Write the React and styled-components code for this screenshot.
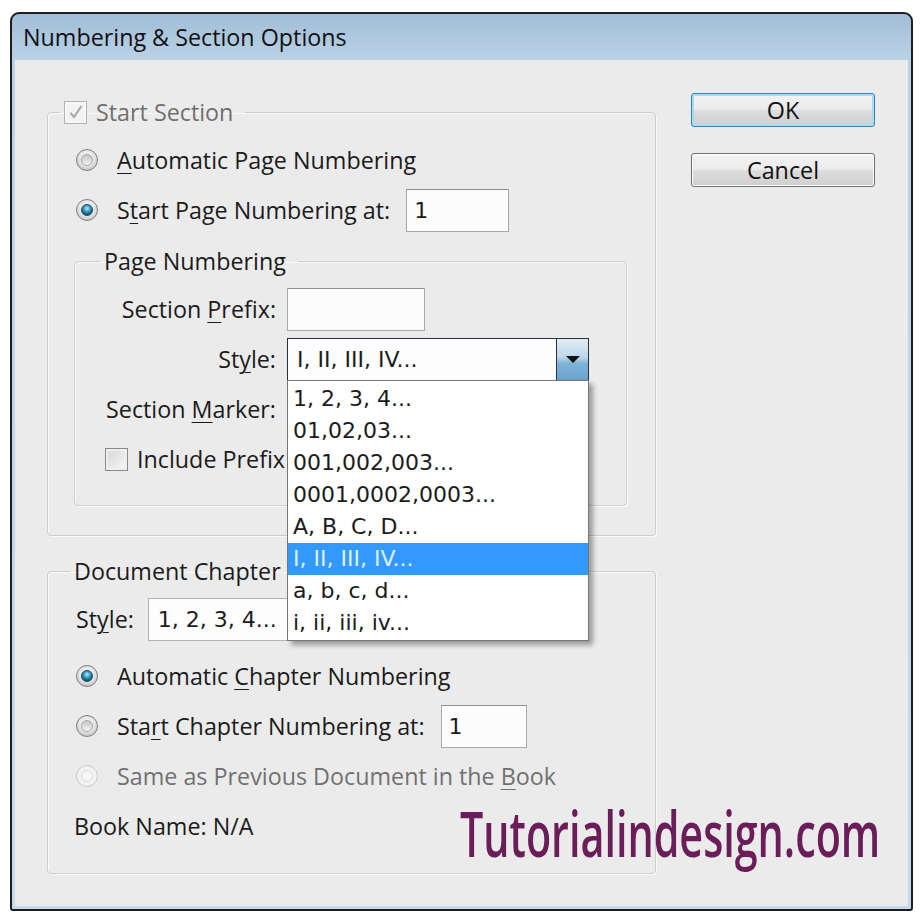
import React, { useLayoutEffect, useRef, useState } from "react";
import styled, { createGlobalStyle } from "styled-components";

const GlobalStyle = createGlobalStyle`
  html, body { margin: 0; padding: 0; background: #ffffff; }
  body { font-family: "Open Sans", "Noto Sans", sans-serif; color: #1b1b1b; }
  * { box-sizing: border-box; }
`;

const Window = styled.div`
  position: relative;
  width: 903px;
  height: 899px;
  margin: 12px 0 0 10px;
  border: 2px solid #1d1d1d;
  border-radius: 9px 9px 3px 3px;
  background: linear-gradient(180deg, #a2bdd7 0, #bad2e6 46px, #c3dbec 100%);
  display: flex;
  flex-direction: column;
  overflow: hidden;
`;

const TitleBar = styled.div`
  height: 46px;
  padding-left: 11px;
  display: flex;
  align-items: center;
  font-size: 23.3px;
  color: #111;
`;

const Panel = styled.div`
  flex: 1;
  margin: 0 3px 3px;
  background: #ebebeb;
  display: flex;
  padding-left: 32px;
`;

const MainColumn = styled.div`
  width: 609px;
  padding-top: 38px;
`;

const ButtonColumn = styled.div`
  margin-left: 35px;
  padding-top: 33px;
  display: flex;
  flex-direction: column;
  gap: 26px;
`;

const Group = styled.fieldset`
  margin: ${(p) => p.$margin || "0"};
  padding: 9px 0 ${(p) => p.$pb || 0}px;
  border: 1px solid #cdcdcd;
  border-radius: 4px;
  box-shadow: inset 1px 1px 0 #f9f9f9, 1px 1px 0 #f9f9f9;
  min-width: 0;
`;

const Legend = styled.legend`
  margin-left: ${(p) => p.$offset}px;
  padding: 0 12px 0 4px;
  height: 28px;
  display: flex;
  align-items: center;
  gap: 9px;
  font-size: 23.3px;
  white-space: nowrap;
  color: ${(p) => (p.$muted ? "#6f6f6f" : "#1b1b1b")};
`;

const Row = styled.div`
  height: 50px;
  display: flex;
  align-items: center;
  padding-left: ${(p) => p.$indent || 0}px;
  gap: ${(p) => (p.$gap ?? 19)}px;
  margin-bottom: ${(p) => p.$after || 0}px;
  font-size: 23.3px;
  white-space: nowrap;
  color: ${(p) => (p.$disabled ? "#717171" : "#1b1b1b")};
`;

const FieldLabel = styled.span`
  width: 201px;
  text-align: right;
`;

const Key = styled.span`
  text-decoration: underline;
  text-underline-offset: 4px;
  text-decoration-thickness: 1px;
`;

const Radio = styled.span`
  flex: none;
  position: relative;
  width: 22px;
  height: 22px;
  border-radius: 50%;
  border: 1px solid ${(p) => (p.$disabled ? "#cacaca" : "#7f7f7f")};
  background: ${(p) =>
    p.$disabled
      ? "#f1f1f1"
      : "radial-gradient(circle at 50% 40%, #fbfbfb 0, #e4e4e4 50%, #c4c4c4 80%, #ececec 100%)"};
  &::after {
    content: "";
    position: absolute;
    inset: 4px;
    border-radius: 50%;
    border: 1px solid
      ${(p) => (p.$on ? "#1d4a63" : p.$disabled ? "#dedede" : "#a9a9a9")};
    background: ${(p) =>
      p.$on
        ? "radial-gradient(circle at 50% 35%, #b6ebfa 0, #42a3c9 35%, #145f84 68%, #0a2e44 100%)"
        : p.$disabled
        ? "#f6f6f6"
        : "linear-gradient(#c4c4c4, #f4f4f4)"};
  }
`;

const Check = styled.span`
  flex: none;
  width: 23px;
  height: 23px;
  border: 1px solid ${(p) => (p.$disabled ? "#b4b4b4" : "#8a8a8a")};
  background: ${(p) =>
    p.$disabled ? "#f3f3f3" : "linear-gradient(135deg, #d6d6d6, #f8f8f8)"};
  box-shadow: inset 0 0 0 2px ${(p) => (p.$disabled ? "#f7f7f7" : "#eeeeee")};
  display: flex;
  align-items: center;
  justify-content: center;
`;

const TextBox = styled.div`
  width: ${(p) => p.$w}px;
  height: 43px;
  margin-left: ${(p) => p.$shift || 0}px;
  border: 1px solid #a9a9a9;
  border-top-color: #8f8f8f;
  background: #fcfcfc;
  display: flex;
  align-items: center;
  padding-left: 7px;
  font-family: "DejaVu Sans", "Open Sans", sans-serif;
  font-size: 22px;
  color: #1b1b1b;
`;

const SelectBox = styled.div`
  position: relative;
  z-index: ${(p) => (p.$open ? 5 : "auto")};
  width: ${(p) => p.$w}px;
  height: 43px;
  border: 1px solid ${(p) => (p.$open ? "#27323d" : "#b3b3b3")};
  background: #fdfdfd;
  display: flex;
  align-items: center;
  padding-left: 9px;
  font-family: "DejaVu Sans", "Open Sans", sans-serif;
  font-size: 22px;
  color: #1b1b1b;
`;

const ArrowButton = styled.span`
  margin-left: auto;
  width: 32px;
  align-self: stretch;
  border-left: 1px solid #27323d;
  background: linear-gradient(#e3edf6 0, #bcd6ea 45%, #7fb2d8 60%, #6aa4cf 100%);
  display: flex;
  align-items: center;
  justify-content: center;
  &::after {
    content: "";
    border-left: 7px solid transparent;
    border-right: 7px solid transparent;
    border-top: 7px solid #111;
  }
`;

const List = styled.ul`
  position: absolute;
  top: 100%;
  left: -1px;
  width: calc(100% + 2px);
  margin: 0;
  padding: 2px 0 1px;
  list-style: none;
  background: #ffffff;
  border: 1px solid #777777;
  box-shadow: 4px 4px 5px rgba(0, 0, 0, 0.35);
`;

const Item = styled.li`
  height: 32px;
  line-height: 32px;
  padding-left: 5px;
  background: ${(p) => (p.$active ? "#3399ff" : "transparent")};
  color: ${(p) => (p.$active ? "#def0ff" : "#1b1b1b")};
`;

const Button = styled.button`
  width: 184px;
  height: 34px;
  padding: 0;
  font-family: inherit;
  font-size: 23.3px;
  line-height: 32px;
  color: #111;
  border: 1px solid ${(p) => (p.$primary ? "#3d7fb0" : "#707070")};
  border-radius: 3px;
  background: linear-gradient(#f3f3f3 0, #ebebeb 48%, #dddddd 52%, #cfcfcf 100%);
  box-shadow: ${(p) =>
    p.$primary ? "inset 0 0 0 2px #a6dcf6" : "inset 0 0 0 1px #fbfbfb"};
`;

const Mark = styled.div`
  position: absolute;
  left: 448px;
  top: 787px;
  font-family: "Open Sans", sans-serif;
  font-weight: 600;
  font-size: 64px;
  line-height: 64px;
  white-space: nowrap;
  color: #6b1d59;
  transform-origin: 0 0;
  z-index: 6;
`;

const styles = [
  "1, 2, 3, 4...",
  "01,02,03...",
  "001,002,003...",
  "0001,0002,0003...",
  "A, B, C, D...",
  "I, II, III, IV...",
  "a, b, c, d...",
  "i, ii, iii, iv...",
];

const Tick = () => (
  <svg width="16" height="16" viewBox="0 0 16 16">
    <path d="M2.5 9 L6 13 L13.5 2" fill="none" stroke="#a9a9a9" strokeWidth="2.2" />
  </svg>
);

const Watermark = () => {
  const ref = useRef(null);
  const [scale, setScale] = useState(1);
  useLayoutEffect(() => {
    if (ref.current) setScale(420 / ref.current.offsetWidth);
  }, []);
  return (
    <Mark ref={ref} style={{ transform: `scaleX(${scale})` }}>
      Tutorialindesign.com
    </Mark>
  );
};

export default function App() {
  return (
    <>
      <GlobalStyle />
      <Window>
        <TitleBar>Numbering &amp; Section Options</TitleBar>
        <Panel>
          <MainColumn>
            <Group $pb={0}>
              <Legend $offset={12} $muted>
                <Check $disabled>
                  <Tick />
                </Check>
                Start Section
              </Legend>
              <Row $indent={28}>
                <Radio />
                <span>
                  <Key>A</Key>utomatic Page Numbering
                </span>
              </Row>
              <Row $indent={28}>
                <Radio $on />
                <span>
                  S<Key>t</Key>art Page Numbering at:
                </span>
                <TextBox $w={103} $shift={-3}>
                  1
                </TextBox>
              </Row>

              <Group $margin="12px 28px 29px 26px" $pb={21}>
                <Legend $offset={25}>Page Numbering</Legend>
                <Row $gap={11}>
                  <FieldLabel>
                    Section <Key>P</Key>refix:
                  </FieldLabel>
                  <TextBox $w={138} />
                </Row>
                <Row $gap={11}>
                  <FieldLabel>
                    St<Key>y</Key>le:
                  </FieldLabel>
                  <SelectBox $w={302} $open>
                    I, II, III, IV...
                    <ArrowButton />
                    <List>
                      {styles.map((s, i) => (
                        <Item key={s} $active={i === 5}>
                          {s}
                        </Item>
                      ))}
                    </List>
                  </SelectBox>
                </Row>
                <Row $gap={11}>
                  <FieldLabel>
                    Section <Key>M</Key>arker:
                  </FieldLabel>
                  <TextBox $w={302} />
                </Row>
                <Row $indent={30} $gap={9}>
                  <Check />
                  <span>Include Prefix when Numbering Pages</span>
                </Row>
              </Group>
            </Group>

            <Group $margin="21px 0 0" $pb={22}>
              <Legend $offset={22}>Document Chapter Numbering</Legend>
              <Row $indent={28} $gap={14} $after={7}>
                <span>
                  St<Key>y</Key>le:
                </span>
                <SelectBox $w={302}>1, 2, 3, 4...</SelectBox>
              </Row>
              <Row $indent={28}>
                <Radio $on />
                <span>
                  Automatic <Key>C</Key>hapter Numbering
                </span>
              </Row>
              <Row $indent={28}>
                <Radio />
                <span>
                  Sta<Key>r</Key>t Chapter Numbering at:
                </span>
                <TextBox $w={86} $shift={-3}>
                  1
                </TextBox>
              </Row>
              <Row $indent={28} $disabled>
                <Radio $disabled />
                <span>
                  Same as Previous Document in the <Key>B</Key>ook
                </span>
              </Row>
              <Row $indent={26}>Book Name: N/A</Row>
            </Group>
          </MainColumn>

          <ButtonColumn>
            <Button $primary>OK</Button>
            <Button>Cancel</Button>
          </ButtonColumn>
        </Panel>
        <Watermark />
      </Window>
    </>
  );
}
